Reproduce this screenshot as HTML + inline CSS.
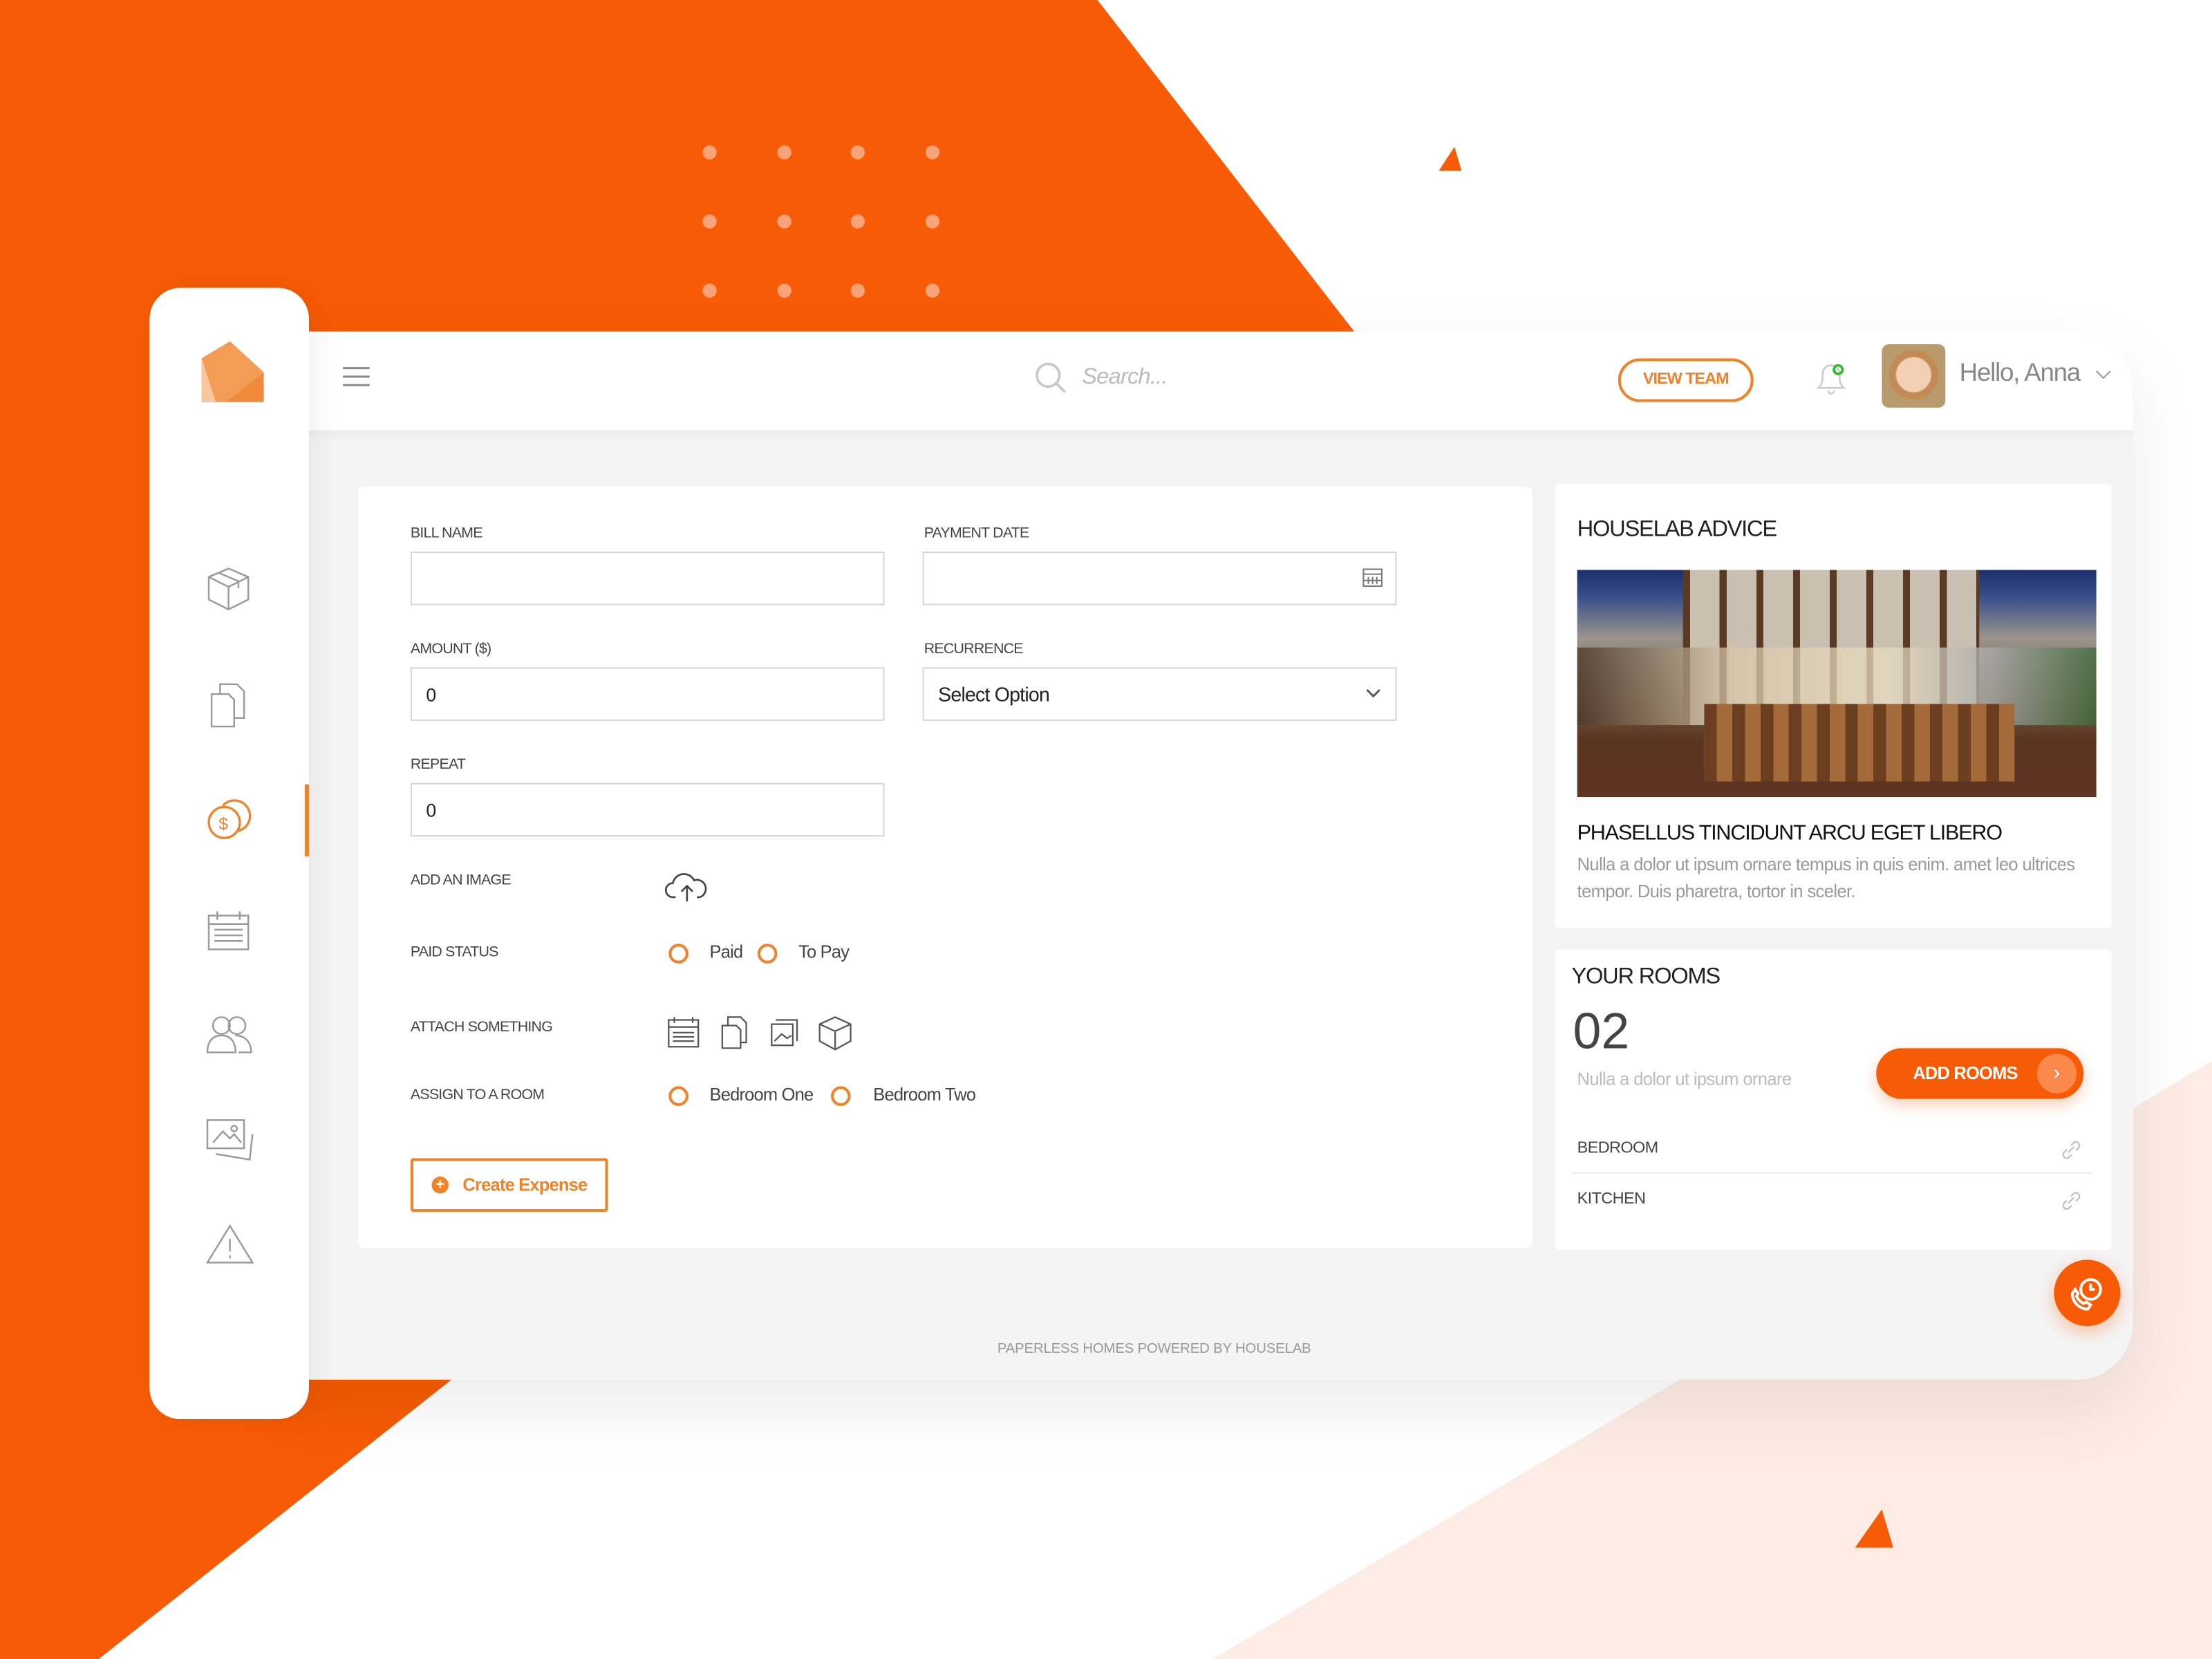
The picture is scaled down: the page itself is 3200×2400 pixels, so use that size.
<!DOCTYPE html>
<html><head><meta charset="utf-8"><style>
*{margin:0;padding:0;box-sizing:border-box}
html,body{width:3200px;height:2400px;overflow:hidden;background:#fff}
#w{position:absolute;left:0;top:0;width:1568px;height:1176px;transform:scale(2.0408);transform-origin:0 0;font-family:"Liberation Sans",sans-serif;color:#333}
.a{position:absolute}
.lbl{position:absolute;font-size:10.5px;color:#444;letter-spacing:-.4px}
.inp{position:absolute;border:1.5px solid #d6d6d6;background:#fff;height:38px;font-size:13px;padding:11px 10px;color:#222}
.rad{position:absolute;width:14px;height:14px;border:2px solid #f0832a;border-radius:50%}
.opt{position:absolute;font-size:12.5px;color:#444;letter-spacing:-.4px}
.ic{position:absolute;fill:none;stroke:#9a9a9a;stroke-width:1.2}
</style></head><body><div id="w">
<svg class="a" style="left:0;top:0" width="1568" height="1176">
<polygon points="0,0 778,0 1320,700 700,700 320,978 70,1176 0,1176" fill="#f75b05"/>
<polygon points="860,1176 1568,752 1568,1176" fill="#fdece4"/>
<polygon points="1020,121 1031,104 1036,121" fill="#f75b05"/>
<polygon points="1315,1097 1334,1070 1342,1097" fill="#f75b05"/>
<g fill="#faa278">
<circle cx="503" cy="108" r="5"/><circle cx="556" cy="108" r="5"/><circle cx="608" cy="108" r="5"/><circle cx="661" cy="108" r="5"/>
<circle cx="503" cy="157" r="5"/><circle cx="556" cy="157" r="5"/><circle cx="608" cy="157" r="5"/><circle cx="661" cy="157" r="5"/>
<circle cx="503" cy="206" r="5"/><circle cx="556" cy="206" r="5"/><circle cx="608" cy="206" r="5"/><circle cx="661" cy="206" r="5"/>
</g></svg>
<div class="a" style="left:200px;top:235px;width:1312px;height:743px;background:#f4f4f4;border-radius:0 40px 40px 0;box-shadow:0 20px 50px rgba(0,0,0,.08);overflow:hidden">
<div class="a" style="left:0;top:0;width:1312px;height:70px;background:#fff;box-shadow:0 2px 8px rgba(0,0,0,.05)"></div>
</div>
<div class="a" style="left:106px;top:204px;width:113px;height:802px;background:#fff;border-radius:22px;box-shadow:4px 0 20px rgba(0,0,0,.06)"></div>
<svg class="a" style="left:140px;top:240px" width="50" height="48"><polygon points="3,14 23,2 47,24 47,45 3,45" fill="#ef8a3a"/><polygon points="3,14 23,2 47,24 20,45 3,45" fill="#f29c55"/><polygon points="3,14 13,45 3,45" fill="#f8c79d"/></svg>
<div class="a" style="left:216px;top:556px;width:3px;height:51px;background:#f0832a"></div>
<svg class="ic" style="left:145px;top:400px" width="34" height="34"><path d="M3 9l14-6 14 6v16l-14 7-14-7z M3 9l14 7 14-7 M17 16v16 M10 6l14 6v5"/></svg>
<svg class="ic" style="left:147px;top:482px" width="30" height="36"><path d="M3 10h12l4 4v19H3z M9 10V3h12l5 5v19h-7"/></svg>
<svg class="a" style="left:144px;top:562px" width="36" height="36" fill="none" stroke="#f0832a" stroke-width="1.6"><circle cx="15" cy="21" r="11"/><path d="M14 9a11 11 0 1 1 11 18"/><text x="11" y="26" font-size="12" fill="#f0832a" stroke="none" font-family="Liberation Sans">$</text></svg>
<svg class="ic" style="left:146px;top:644px" width="32" height="32"><rect x="2" y="5" width="28" height="24"/><path d="M2 11h28 M8 2v6 M24 2v6 M6 15h20 M6 19h20 M6 23h20"/></svg>
<svg class="ic" style="left:145px;top:718px" width="36" height="30"><circle cx="12" cy="9" r="6"/><circle cx="23" cy="9" r="6"/><path d="M2 28c0-8 4-12 10-12s10 4 10 12z M22 16c6 0 11 4 11 12h-9"/></svg>
<svg class="ic" style="left:145px;top:790px" width="36" height="34"><rect x="2" y="4" width="26" height="20"/><path d="M6 20l7-8 5 5 3-3 5 6 M8 28l24 4 2-18"/><circle cx="21" cy="10" r="2"/></svg>
<svg class="ic" style="left:145px;top:866px" width="36" height="32"><path d="M18 3L2 29h32z M18 12v9 M18 24v2"/></svg>
<svg class="a" style="left:243px;top:259px" width="20" height="16" stroke="#888" stroke-width="1.5"><path d="M0 2h19 M0 8h19 M0 14h19"/></svg>
<svg class="a" style="left:733px;top:256px" width="24" height="24" fill="none" stroke="#c8c8c8" stroke-width="1.8"><circle cx="10" cy="10" r="8"/><path d="M16 16l6 6"/></svg>
<div class="a" style="left:767px;top:259px;font-size:16px;font-style:italic;color:#bbb;letter-spacing:-.4px">Search...</div>
<div class="a" style="left:1147px;top:254px;width:96px;height:31px;border:2px solid #f0832a;border-radius:16px;color:#f0832a;font-size:11.5px;font-weight:bold;text-align:center;line-height:27px;letter-spacing:-.5px">VIEW TEAM</div>
<svg class="a" style="left:1285px;top:254px" width="26" height="26" fill="none" stroke="#ccc" stroke-width="1.3"><path d="M4 21c3-3 3-5 3-10a6 6 0 0 1 12 0c0 5 0 7 3 10z M11 23a2 2 0 0 0 4 0"/><circle cx="18" cy="8" r="3" stroke="#2bc02b" stroke-width="1.8"/></svg>
<div class="a" style="left:1334px;top:244px;width:45px;height:45px;border-radius:5px;background:radial-gradient(circle at 50% 48%,#f3d0b3 0 12px,#c28a55 13px 17px,#b89a6c 18px)"></div>
<div class="a" style="left:1389px;top:254px;font-size:18px;color:#888;letter-spacing:-.6px">Hello, Anna</div>
<svg class="a" style="left:1485px;top:262px" width="12" height="8" fill="none" stroke="#999"><path d="M1 1l5 5 5-5"/></svg>
<div class="a" style="left:254px;top:345px;width:832px;height:540px;background:#fff;border-radius:4px"></div>
<div class="lbl" style="left:291px;top:372px">BILL NAME</div>
<div class="inp" style="left:291px;top:391px;width:336px"></div>
<div class="lbl" style="left:655px;top:372px">PAYMENT DATE</div>
<div class="inp" style="left:654px;top:391px;width:336px"></div>
<svg class="a" style="left:965px;top:401px" width="16" height="16" fill="none" stroke="#777"><rect x="1.5" y="2.5" width="13" height="12"/><path d="M1.5 6h13 M5 8v5 M8 8v5 M11 8v5 M1.5 10.5h13"/></svg>
<div class="lbl" style="left:291px;top:454px">AMOUNT ($)</div>
<div class="inp" style="left:291px;top:473px;width:336px">0</div>
<div class="lbl" style="left:655px;top:454px">RECURRENCE</div>
<div class="inp" style="left:654px;top:473px;width:336px;font-size:14px;padding-top:10px;letter-spacing:-.4px">Select Option</div>
<svg class="a" style="left:968px;top:488px" width="11" height="8" fill="none" stroke="#555" stroke-width="1.4"><path d="M1 1l4.5 4.5L10 1"/></svg>
<div class="lbl" style="left:291px;top:536px">REPEAT</div>
<div class="inp" style="left:291px;top:555px;width:336px">0</div>
<div class="lbl" style="left:291px;top:618px">ADD AN IMAGE</div>
<svg class="a" style="left:471px;top:617px" width="32" height="24" fill="none" stroke="#444" stroke-width="1.3"><path d="M8 19H6a5 5 0 0 1 0-10 8 8 0 0 1 15-2 6 6 0 0 1 4 12h-2 M16 12v10 M12 15l4-4 4 4"/></svg>
<div class="lbl" style="left:291px;top:669px">PAID STATUS</div>
<div class="rad" style="left:474px;top:669px"></div><div class="opt" style="left:503px;top:668px">Paid</div>
<div class="rad" style="left:537px;top:669px"></div><div class="opt" style="left:566px;top:668px">To Pay</div>
<div class="lbl" style="left:291px;top:722px">ATTACH SOMETHING</div>
<svg class="a" style="left:472px;top:718px" width="136" height="28" fill="none" stroke="#555" stroke-width="1.1"><rect x="2" y="5" width="21" height="19"/><path d="M2 10h21 M6 3v4 M19 3v4 M5 14h15 M5 17h15 M5 20h15 M40 9h10l3 3v13H40z M44 9V3h9l4 4v14h-4 M75 8h15v15H75z M78 5h15v15 M77 20l5-5 4 3 3-2 M109 8l11-5 11 5v12l-11 6-11-6z M109 8l11 5 11-5 M120 13v13"/></svg>
<div class="lbl" style="left:291px;top:770px">ASSIGN TO A ROOM</div>
<div class="rad" style="left:474px;top:770px"></div><div class="opt" style="left:503px;top:769px">Bedroom One</div>
<div class="rad" style="left:589px;top:770px"></div><div class="opt" style="left:619px;top:769px">Bedroom Two</div>
<div class="a" style="left:291px;top:821px;width:140px;height:38px;border:2px solid #f0832a;border-radius:2px;color:#f0832a;font-size:12.5px;font-weight:bold;line-height:34px;padding-left:35px;letter-spacing:-.4px">Create Expense</div>
<div class="a" style="left:306px;top:834px;width:12px;height:12px;border-radius:50%;background:#f0832a;color:#fff;font-size:11px;line-height:12px;text-align:center;font-weight:bold">+</div>
<div class="a" style="left:1102px;top:343px;width:395px;height:315px;background:#fff;border-radius:4px"></div>
<div class="a" style="left:1118px;top:367px;font-size:16px;color:#222;letter-spacing:-.6px">HOUSELAB ADVICE</div>
<div class="a" style="left:1118px;top:404px;width:368px;height:161px;overflow:hidden;background:linear-gradient(#1d2f6e 0,#3a4e8a 12%,#9a948c 30%,#7d6450 55%,#5a3520 75%,#5e3422 100%)">
<div class="a" style="left:75px;top:0;width:210px;height:110px;background:repeating-linear-gradient(90deg,#5a3a22 0 5px,#c9c0b2 5px 26px)"></div>
<div class="a" style="left:0;top:55px;width:368px;height:55px;background:linear-gradient(90deg,#4a3428,#d8c8a8 30%,#e8dcc0 60%,#aaa 80%,#3a6a3a 100%);opacity:.75"></div>
<div class="a" style="left:90px;top:95px;width:220px;height:55px;background:repeating-linear-gradient(90deg,#6a3e1e 0 9px,#a46a3a 9px 20px)"></div>
</div>
<div class="a" style="left:1118px;top:582px;font-size:15px;color:#111;letter-spacing:-.6px">PHASELLUS TINCIDUNT ARCU EGET LIBERO</div>
<div class="a" style="left:1118px;top:604px;width:372px;font-size:12.5px;line-height:19px;color:#999;letter-spacing:-.3px">Nulla a dolor ut ipsum ornare tempus in quis enim. amet leo ultrices tempor. Duis pharetra, tortor in sceler.</div>
<div class="a" style="left:1102px;top:673px;width:395px;height:213px;background:#fff;border-radius:4px"></div>
<div class="a" style="left:1114px;top:684px;font-size:16px;color:#222;letter-spacing:-.6px">YOUR ROOMS</div>
<div class="a" style="left:1115px;top:710px;font-size:36px;color:#444">02</div>
<div class="a" style="left:1118px;top:758px;font-size:12.5px;color:#bbb;letter-spacing:-.3px">Nulla a dolor ut ipsum ornare</div>
<div class="a" style="left:1330px;top:743px;width:147px;height:36px;border-radius:18px;background:#f75b05;color:#fff;font-size:12.5px;font-weight:bold;line-height:36px;padding-left:26px;letter-spacing:-.4px;box-shadow:0 4px 10px rgba(247,91,5,.3)">ADD ROOMS</div>
<div class="a" style="left:1444px;top:747px;width:28px;height:28px;border-radius:50%;background:#f98a4c;color:#fff;text-align:center;line-height:26px;font-size:14px">›</div>
<div class="a" style="left:1118px;top:808px;font-size:11.5px;color:#444;letter-spacing:-.3px">BEDROOM</div>
<div class="a" style="left:1114px;top:831px;width:370px;height:1px;background:#eee"></div>
<div class="a" style="left:1118px;top:844px;font-size:11.5px;color:#444;letter-spacing:-.3px">KITCHEN</div>
<svg class="a" style="left:1460px;top:807px" width="16" height="16" fill="none" stroke="#bbb"><path d="M6 10l4-4 M5 8l-2 2a2.5 2.5 0 0 0 3.5 3.5l2-2 M8 5l2-2a2.5 2.5 0 0 1 3.5 3.5l-2 2"/></svg>
<svg class="a" style="left:1460px;top:843px" width="16" height="16" fill="none" stroke="#bbb"><path d="M6 10l4-4 M5 8l-2 2a2.5 2.5 0 0 0 3.5 3.5l2-2 M8 5l2-2a2.5 2.5 0 0 1 3.5 3.5l-2 2"/></svg>
<div class="a" style="left:1456px;top:893px;width:47px;height:47px;border-radius:50%;background:#f75b05;box-shadow:0 4px 12px rgba(247,91,5,.35)"></div>
<svg class="a" style="left:1466px;top:903px" width="28" height="28" fill="none" stroke="#fff" stroke-width="2"><circle cx="16" cy="11" r="7"/><path d="M16 7v4h3 M3 14c0 6 5 11 11 11l2-3-3-2-2 1c-2-1-4-3-5-5l1-2-2-3z"/></svg>
<div class="a" style="left:707px;top:951px;font-size:10px;color:#999;letter-spacing:-.1px">PAPERLESS HOMES POWERED BY HOUSELAB</div>
</div></body></html>
